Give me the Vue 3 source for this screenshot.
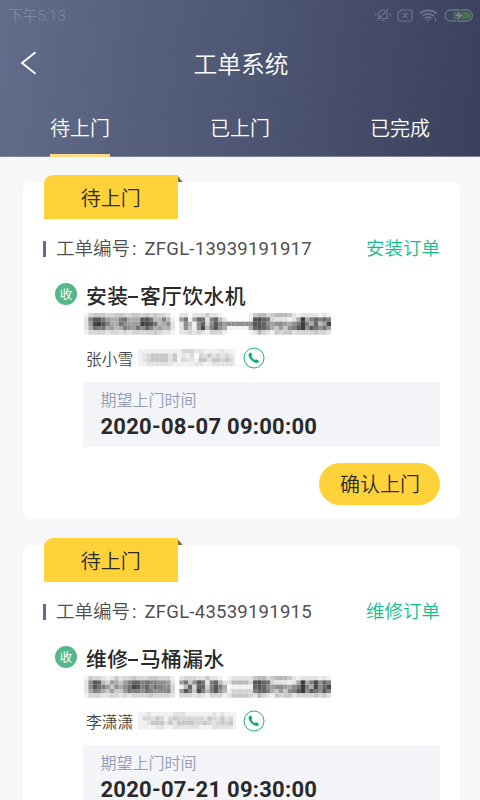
<script setup>
import { ref } from 'vue'

const tabs = ['待上门', '已上门', '已完成']
const active = ref(0)

const orders = [
  {
    no: 'ZFGL-13939191917',
    type: '安装订单',
    title: ['安装', '客厅饮水机'],
    name: '张小雪',
    time: '2020-08-07 09:00:00',
    address: [
      '13444 3344 33443 434332 0 022022 242210 00000 14553 45554 212222121',
      '29cca 7669 a666c ca5595 1 07a17b a29b52 00000 1cdba 32221 26e69b9b9',
      '27dec 966a 8777e dca568 2 028518 b38c97 88888 8ccb8 78876 8ae96b57d',
      '26a9a 6756 987a8 b96756 2 028418 d59c86 11111 6bcb9 64748 9ce8ca8a7',
      '13333 2332 32333 334322 1 022323 213331 00000 12532 14344 233334332'
    ],
    phone: [
      '1111111111333 2211112111',
      '1234444241213 0324232321',
      '1234444241322 1442443431',
      '1122222211111 2211222221'
    ]
  },
  {
    no: 'ZFGL-43539191915',
    type: '维修订单',
    title: ['维修', '马桶漏水'],
    name: '李潇潇',
    time: '2020-07-21 09:30:00',
    address: [
      '14332 1242 33433 344333 1 023332 242210 12222 24553 45554 212222121',
      '28cb5 3764 79bb9 a99887 2 07a48c a29b52 25555 3cdba 32221 26e69d8b9',
      '28ca9 7486 8adc9 b8a988 3 015b3b b39c96 01111 1bcb8 78876 8ae96d8bd',
      '26986 4744 7a998 a98889 3 07c94d 959c85 13333 39bb9 64748 9ce8ca8c9',
      '13332 2332 32333 343333 2 033323 213331 24444 32532 14344 233334342'
    ],
    phone: [
      '1121111122211 1111212111',
      '1332431343333 3324324231',
      '1124442424444 3343234341',
      '1111221122222 2111222221'
    ]
  }
]

const CELL = 4.333

function cells(rows) {
  return rows.flatMap((row, y) =>
    [...row.replaceAll(' ', '')].map((c, x) => {
      const v = 255 - parseInt(c, 16) * 14
      return { x: x * CELL, y: y * CELL, fill: `rgb(${v},${v},${v})` }
    })
  )
}
</script>

<template>
  <div class="screen">
    <header class="header">
      <div class="status">
        <span class="clock">下午5:13</span>
        <div class="status-icons">
          <svg width="16" height="14" viewBox="0 0 16 14" fill="none" stroke="currentColor" stroke-width="1.2">
            <path d="M2.500 10.500h11M4 10.500V6C4 3.500 5.500 2 8 2s4 1.500 4 4v4.500M6.500 12.500h3M2 12.500L13.500.8M1 5v3M15 5v3" />
          </svg>
          <svg width="16" height="13" viewBox="0 0 16 13" fill="none" stroke="currentColor" stroke-width="1.2">
            <path d="M4 1h9.500a1.500 1.500 0 0 1 1.500 1.500v8a1.500 1.500 0 0 1-1.500 1.500h-11A1.500 1.500 0 0 1 1 10.500V4zM5.800 4.200l4.600 4.600M10.400 4.200L5.800 8.800" />
          </svg>
          <svg width="19" height="13" viewBox="0 0 19 13" fill="none" stroke="currentColor" stroke-width="1.7">
            <path d="M1 4.300c4.500-4 12-4 16.500 0M3.500 7c3.300-2.900 8.200-2.900 11.500 0M6 9.500c2-1.600 4.500-1.600 6.500 0" />
            <circle cx="9.200" cy="11.300" r="1" fill="currentColor" stroke="none" />
            <path d="M16.500 9v3.500" stroke-width="1" />
          </svg>
          <svg width="30" height="13" viewBox="0 0 30 13">
            <rect x="1" y="1" width="27.500" height="11" rx="5.500" fill="none" stroke="currentColor" stroke-width="1.300" />
            <path d="M9 3h14.500a3.500 3.500 0 0 1 0 7H9z" fill="#477150" />
            <path d="M17 0l-7 7.500h4L12 13l8-8h-4.500z" fill="#7b839a" stroke="#414963" stroke-width=".8" />
          </svg>
        </div>
      </div>
      <div class="nav">
        <svg class="back" width="18" height="24" viewBox="0 0 18 24" fill="none" stroke="#fff" stroke-width="1.900">
          <path d="M15.500 1.300L2 12l13.500 10.700" />
        </svg>
        <h1>工单系统</h1>
      </div>
      <nav class="tabs">
        <button v-for="(t, i) in tabs" :key="t" class="tab" :class="{ active: active === i }" @click="active = i">
          <span>{{ t }}</span>
        </button>
      </nav>
    </header>

    <main class="list">
      <article v-for="o in orders" :key="o.no" class="card">
        <div class="tag">待上门</div>
        <div class="number-row">
          <i class="bar"></i>
          <span class="label">工单编号<span class="colon">:</span></span>
          <span class="no">{{ o.no }}</span>
          <span class="type">{{ o.type }}</span>
        </div>
        <div class="body">
          <span class="badge">收</span>
          <div class="info">
            <h2>{{ o.title[0] }}<i class="dash"></i>{{ o.title[1] }}</h2>
            <svg class="address" width="247" height="22" viewBox="0 0 247 22">
              <rect v-for="(c, i) in cells(o.address)" :key="i" :x="c.x" :y="c.y" width="4.400" height="4.400" :fill="c.fill" />
            </svg>
            <div class="contact">
              <span class="name">{{ o.name }}</span>
              <svg class="phone" width="98" height="18" viewBox="0 0 98 18">
                <rect v-for="(c, i) in cells(o.phone)" :key="i" :x="c.x" :y="c.y" width="4.400" height="4.400" :fill="c.fill" />
              </svg>
              <svg class="call" width="22" height="22" viewBox="0 0 22 22">
                <circle cx="11" cy="11" r="10" fill="none" stroke="#1eb37a" stroke-width="1" />
                <path d="M6.300 6.200c.8-.9 1.500-.9 2 .0l.9 1.600c.3.600-.8 1.300-.6 1.900.5 1.400 1.600 2.500 3 3.200.7.300 1.300-.9 2-.5l1.900 1.100c.8.500.5 1.300-.3 1.900-1.300 1-3.500.4-5.600-1.100-2-1.500-3.600-3.700-4-5.700-.2-1 .1-1.800.7-2.400z" fill="#11aa6c" />
              </svg>
            </div>
            <div class="time-box">
              <span class="time-label">期望上门时间</span>
              <strong>{{ o.time }}</strong>
            </div>
          </div>
        </div>
        <button class="confirm">确认上门</button>
      </article>
    </main>
  </div>
</template>

<style>
body {
  margin: 0;
  overflow: hidden;
}
</style>

<style scoped>
* {
  box-sizing: border-box;
}
.screen {
  width: 480px;
  height: 800px;
  overflow: hidden;
  background: #f7f7fa;
  font-family: Roboto, "Noto Sans CJK SC", sans-serif;
  font-weight: 350;
  color: #2a2a2a;
}
button {
  border: 0;
  padding: 0;
  background: none;
  font: inherit;
  color: inherit;
}
.header {
  height: 157px;
  background: linear-gradient(97deg, #626d8b 0%, #3a415c 100%);
  border-bottom: 1px solid #7c8397;
  color: #fff;
}
.status {
  height: 31px;
  padding: 0 6px 0 8px;
  display: flex;
  align-items: center;
  justify-content: space-between;
  color: #6b728a;
}
.clock {
  font-size: 14.500px;
  line-height: 20px;
  padding-top: 2px;
  letter-spacing: 0.300px;
  color: #7f879d;
}
.status-icons {
  display: flex;
  align-items: center;
  gap: 6px;
  padding-bottom: 1px;
}
.nav {
  height: 64px;
  display: grid;
  grid-template-columns: 59px 1fr 57px;
  align-items: center;
}
.back {
  margin-left: 20px;
}
h1 {
  margin: 0;
  padding-top: 3px;
  text-align: center;
  font-size: 23.700px;
  line-height: 32px;
  font-weight: 350;
}
.tabs {
  height: 62px;
  display: grid;
  grid-template-columns: repeat(3, 1fr);
}
.tab {
  display: flex;
  justify-content: center;
  font-size: 20px;
  line-height: 68px;
}
.tab span {
  height: 62px;
}
.tab.active span {
  border-bottom: 3px solid #fbdc84;
}
.list {
  padding: 25px 20px 0 23px;
  display: flex;
  flex-direction: column;
  gap: 26px;
}
.card {
  height: 337px;
  flex: none;
  background: #fff;
  border-radius: 8px;
  padding: 0 20px;
  display: flex;
  flex-direction: column;
}
.tag {
  position: relative;
  width: 134px;
  height: 44px;
  margin: -7px 0 0 0.700px;
  background: #ffd239;
  border-radius: 9px 0 0 0;
  text-align: center;
  font-size: 20px;
  line-height: 48px;
}
.tag::after {
  content: "";
  position: absolute;
  left: 100%;
  top: 1px;
  width: 5px;
  height: 6px;
  background: #806d2d;
  clip-path: polygon(0 0, 100% 100%, 0 100%);
}
.number-row {
  height: 59px;
  display: flex;
  align-items: center;
  font-size: 18.500px;
  line-height: 26px;
  color: #505050;
}
.bar {
  width: 3px;
  height: 16px;
  margin-right: 10px;
  background: #636c90;
}
.label {
  width: 88.500px;
  padding-top: 1px;
  white-space: nowrap;
}
.colon {
  margin-left: 2px;
  font-weight: 400;
}
.no {
  font-weight: 400;
  letter-spacing: 0.250px;
}
.type {
  margin-left: auto;
  padding-top: 1px;
  color: #12bd8b;
}
.body {
  display: flex;
  align-items: flex-start;
  padding-left: 12px;
}
.badge {
  width: 22px;
  height: 22px;
  margin-top: 5px;
  flex: none;
  border-radius: 50%;
  background: #54b789;
  color: #fff;
  font-size: 12.500px;
  font-weight: 400;
  line-height: 23px;
  text-align: center;
}
.info {
  flex: 1;
  padding-left: 6px;
}
h2 {
  margin: 0 0 0 3px;
  height: 35px;
  padding-top: 3px;
  display: flex;
  align-items: center;
  font-size: 20.800px;
  letter-spacing: 0.400px;
  line-height: 32px;
  font-weight: 500;
  white-space: nowrap;
}
.dash {
  width: 10px;
  height: 2px;
  margin: 0 1.500px 0 0;
  background: #2a2a2a;
}
.address {
  display: block;
  margin-left: 1px;
}
.contact {
  height: 47px;
  padding: 0 0 1px 3px;
  display: flex;
  align-items: center;
  font-size: 15.800px;
  color: #444;
}
.name {
  width: 52px;
}
.call {
  margin-left: 7px;
}
.time-box {
  height: 65px;
  background: #f4f5f9;
  padding: 7px 17.500px 0;
  display: flex;
  flex-direction: column;
}
.time-label {
  font-size: 16px;
  line-height: 24px;
  color: #949bb5;
}
strong {
  font-size: 22px;
  line-height: 28px;
  letter-spacing: 0.250px;
  font-weight: 700;
}
.confirm {
  align-self: flex-end;
  width: 121px;
  height: 42px;
  margin-top: 16px;
  padding-left: 1px;
  border-radius: 21px;
  background: #ffd239;
  font-size: 20px;
  line-height: 44px;
}
</style>
